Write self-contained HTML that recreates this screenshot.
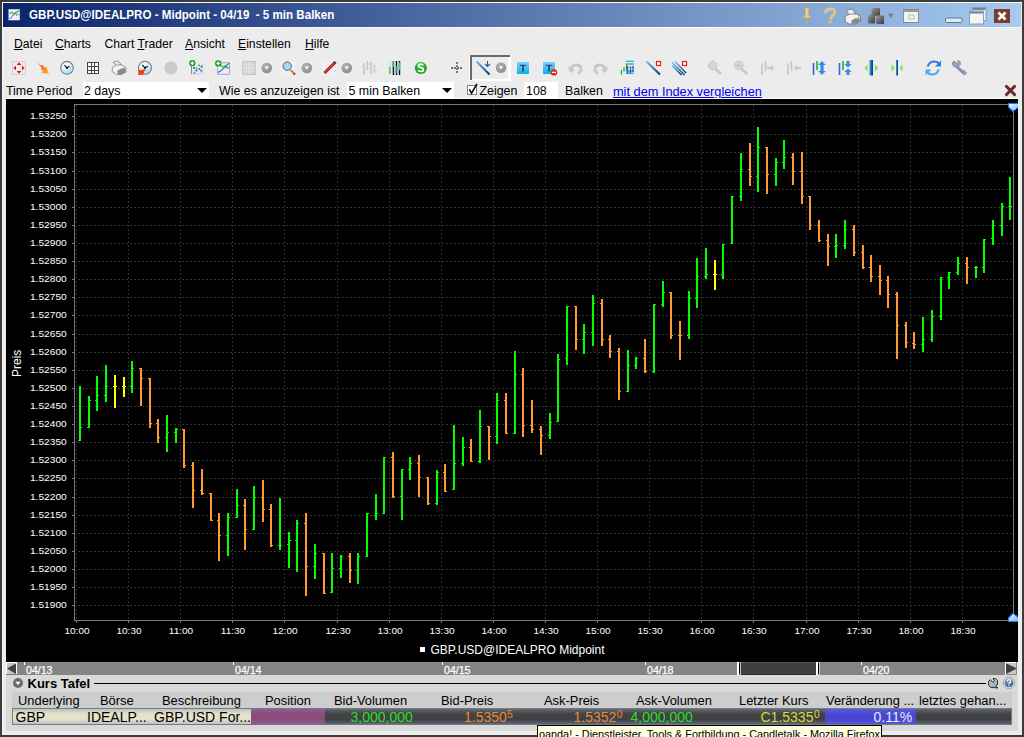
<!DOCTYPE html>
<html><head><meta charset="utf-8">
<style>
*{margin:0;padding:0;box-sizing:border-box}
html,body{width:1024px;height:737px;overflow:hidden;background:#3c3c3c;font-family:"Liberation Sans",sans-serif;color:#000}
.a{position:absolute}
#win{position:absolute;left:2px;top:2px;width:1020px;height:733px;background:#ececec;border-left:1px solid #fafafa;border-top:1px solid #fafafa}
#title{position:absolute;left:3px;top:3px;width:1018px;height:24px;background:linear-gradient(to right,#0a246a,#a6caf0)}
#title .t{position:absolute;left:25.6px;top:4.5px;color:#fff;font-weight:bold;font-size:12.5px;white-space:pre;line-height:15px;transform:scaleX(0.927);transform-origin:0 0}
.menu{position:absolute;top:36.5px;font-size:12.2px;white-space:pre;line-height:15px}
.menu u{text-decoration:underline;text-underline-offset:1px}
.opt{position:absolute;top:84.3px;font-size:12.4px;white-space:pre;line-height:15px}
.wbox{position:absolute;background:#fff}
.darr{position:absolute;width:0;height:0;border-left:5.2px solid transparent;border-right:5.2px solid transparent;border-top:5.2px solid #000}
#chart{position:absolute;left:6px;top:99px;width:1012px;height:563px;background:#000;overflow:hidden}
.yl{position:absolute;left:0;width:60.8px;text-align:right;color:#fff;font-size:9.4px;line-height:13px;white-space:pre;transform:scaleX(1.088);transform-origin:100% 0}
.xl{position:absolute;top:524.5px;width:72px;text-align:center;color:#fff;font-size:9.4px;line-height:13px;transform:scaleX(1.07)}
#scroll{position:absolute;left:6px;top:662px;width:1011px;height:13px;background:#858585}
.dl{position:absolute;top:664px;color:#fff;font-size:10.6px;line-height:12px;-webkit-text-stroke:0.25px #fff}
#panel{position:absolute;left:6px;top:675px;width:1012px;height:56px;background:#d9d9d9}
.hd{position:absolute;top:694px;font-size:12.9px;white-space:pre;line-height:14px}
.dt{position:absolute;top:709.8px;font-size:14px;white-space:pre;line-height:15px}
.dt sup{font-size:10px;vertical-align:0;position:relative;top:-4px;margin-left:0.5px}
</style></head><body>
<div id="win"></div>
<div id="title">
 <svg class="a" style="left:5px;top:5px" width="18" height="18" viewBox="8 8 18 18"><rect x="8.5" y="9.2" width="11.3" height="11.1" fill="#f2eef8"/><path d="M9.5 18.5L11.5 17.6L12.6 15.6L14 14.6L15 12.6L16.5 15L18.6 14.4" stroke="#2a70e0" stroke-width="1.1" fill="none" stroke-dasharray="1.5 0.6"/><path d="M9.5 13.6L11.8 12.2L14 14.2L15.5 13.2L19.3 10.2" stroke="#30c020" stroke-width="1.2" fill="none"/></svg>
 <div class="t">GBP.USD@IDEALPRO - Midpoint - 04/19  - 5 min Balken</div>
</div>
<div class="a" style="left:3px;top:27px;width:1018px;height:1px;background:#fafafa"></div>


<!-- title right icons -->
<svg class="a" style="left:800px;top:5px" width="225" height="22" viewBox="800 5 225 22">
 <!-- pin -->
 <path d="M804 7.5h6v1.5h-1.2v6l2.2 2v1h-3.5v6.5h-1v-6.5h-3.5v-1l2.2-2v-6h-1.2z" fill="#dcc688" stroke="#b09a60" stroke-width="0.4"/>
 <path d="M806.5 9v6" stroke="#f4e8b8" stroke-width="0.8"/>
 <!-- ? -->
 <path d="M825.5 13.2q0-4.2 4.6-4.2q4.6 0 4.6 3.4q0 2.1-2.1 3.2q-1.5.8-1.5 2.5v.8" fill="none" stroke="#dcc688" stroke-width="3"/>
 <rect x="828.7" y="20" width="3.2" height="3.5" fill="#d4b880"/>
 <!-- printer -->
 <path d="M846.5 10.5l5.5-1.5l3.5 4.8l-6 1.7z" fill="#eef2f8" stroke="#555" stroke-width="0.6"/>
 <path d="M845.2 16.5l4.5-2.5h6.5l4.3 2.2v4.8l-5 3h-6.3l-4-2.5z" fill="#f2f2f2" stroke="#666" stroke-width="0.7"/>
 <path d="M851.5 20.5l3.8-2.3l4.5 0.3v3l-5 2.8l-3.3-0.3z" fill="#8a8a8a"/>
 <circle cx="858.5" cy="17.3" r="0.8" fill="#40c040"/>
 <!-- cubes -->
 <defs><linearGradient id="cu" x1="0" y1="0" x2="1" y2="1"><stop offset="0" stop-color="#9a9a9a"/><stop offset="1" stop-color="#3a3a3a"/></linearGradient></defs>
 <rect x="871.5" y="8" width="8.5" height="8" rx="1" fill="url(#cu)"/>
 <rect x="868" y="14.5" width="7" height="9" rx="1" fill="url(#cu)"/>
 <rect x="876" y="15.5" width="8" height="8.5" rx="1" fill="url(#cu)"/>
 <path d="M888 13.5h5.5l-2.75 4.5z" fill="#7a7a7a"/>
 <!-- window -->
 <rect x="903.5" y="9.5" width="15" height="13" fill="#f2f2f2" stroke="#8a8a8a"/>
 <rect x="904" y="10" width="14" height="2" fill="#999"/>
 <rect x="909" y="15" width="5" height="4" fill="none" stroke="#bbb"/>
 <!-- minimize -->
 <rect x="945.5" y="18" width="16.5" height="4.5" rx="1" fill="#dfe8ee" stroke="#5a7a88"/>
 <!-- restore -->
 <rect x="972" y="7.5" width="14" height="13" fill="#f4f4f4" stroke="#8aa0b0"/>
 <rect x="972.5" y="8" width="13" height="2" fill="#6a8898"/>
 <rect x="969.5" y="11" width="14" height="13" fill="#f4f4f4" stroke="#8aa0b0"/>
 <rect x="970" y="11.5" width="13" height="2" fill="#6a8898"/>
 <!-- close -->
 <rect x="994" y="9" width="16" height="14" fill="#7b3b2e"/>
 <path d="M998.5 12.5l7 7M1005.5 12.5l-7 7" stroke="#fff" stroke-width="2.6"/>
</svg>

<!-- toolbar -->
<svg class="a" style="left:0;top:54px" width="1024" height="28" viewBox="0 54 1024 28">
 <defs>
  <radialGradient id="gc" cx="40%" cy="35%" r="70%"><stop offset="0" stop-color="#b4b4b4"/><stop offset="1" stop-color="#8a8a8a"/></radialGradient>
  <radialGradient id="cl" cx="35%" cy="30%" r="75%"><stop offset="0" stop-color="#ffffff"/><stop offset="0.5" stop-color="#d4eefc"/><stop offset="1" stop-color="#a8d8f4"/></radialGradient>
  <radialGradient id="gs" cx="40%" cy="30%" r="75%"><stop offset="0" stop-color="#40d040"/><stop offset="1" stop-color="#109010"/></radialGradient>
  <linearGradient id="og" x1="0" y1="0" x2="1" y2="1"><stop offset="0" stop-color="#d03010"/><stop offset="0.4" stop-color="#ff7020"/><stop offset="1" stop-color="#ffc030"/></linearGradient>
  <linearGradient id="bl" x1="0" y1="0" x2="1" y2="1"><stop offset="0" stop-color="#70c0f8"/><stop offset="1" stop-color="#0a3870"/></linearGradient>
  <linearGradient id="tb" x1="0" y1="0" x2="0" y2="1"><stop offset="0" stop-color="#78d4fa"/><stop offset="1" stop-color="#08b0f4"/></linearGradient>
  <linearGradient id="vb" x1="0" y1="0" x2="1" y2="0"><stop offset="0" stop-color="#3a98e0"/><stop offset="1" stop-color="#083878"/></linearGradient>
 </defs>
 <!-- 1 move -->
 <rect x="12.5" y="61.5" width="13" height="13" fill="none" stroke="#d8d0d0"/>
 <path d="M19 62.3L21.3 65H16.7zM19 73.7L21.3 71H16.7zM13.4 68L16 65.7V70.3zM24.6 68L22 65.7V70.3z" fill="#f00"/>
 <!-- 2 orange arrow -->
 <path d="M37 62.2L41 65.8L42.3 64.8L44.8 67.6L46.2 66.8L49 74L41.2 72.7L43 71.2L40.6 68.6L41.6 67.8z" fill="url(#og)"/>
 <!-- 3 clock -->
 <circle cx="67" cy="67.8" r="6.4" fill="url(#cl)" stroke="#7c7c88" stroke-width="1.1"/>
 <path d="M64.4 65.2L66.9 67.8L69.4 66.4" stroke="#111" stroke-width="1.1" fill="none"/>
 <circle cx="66.9" cy="67.8" r="1.1" fill="#000"/>
 <!-- 4 grid -->
 <g shape-rendering="crispEdges">
 <rect x="87" y="62" width="12" height="12" fill="#45454f"/>
 <path d="M88 63h3v3h-3zM92 63h2v3h-2zM95 63h3v3h-3zM88 67h3v3h-3zM92 67h2v3h-2zM95 67h3v3h-3zM88 71h3v2h-3zM92 71h2v2h-2zM95 71h3v2h-3z" fill="#fcfcff"/>
 </g>
 <!-- 5 printer -->
 <path d="M113 62.3l4.5-1.3l4 3.5l-4.3 1.8z" fill="#d6ecfc" stroke="#555" stroke-width="0.6"/>
 <path d="M112.3 67.5l4.5-2.5h5l4 2.3v4.5l-4.8 2.7h-4.5l-4.2-2.7z" fill="#f4f4f4" stroke="#777" stroke-width="0.7"/>
 <path d="M117.5 70.5l4.5-2.2l3.8 0.6v3.5l-4.5 2.3l-3.8-0.5z" fill="#8a8a8a"/>
 <circle cx="123.8" cy="68.5" r="0.9" fill="#30d030"/>
 <!-- 6 clock orange -->
 <circle cx="145" cy="67.8" r="6.5" fill="url(#cl)" stroke="#7c7c88" stroke-width="1.1"/>
 <path d="M142.3 65L145 67.8L147.8 66.3" stroke="#111" stroke-width="1.1" fill="none"/>
 <circle cx="145" cy="67.8" r="1.1" fill="#000"/>
 <path d="M138.3 69.2l2.5 1.2l1.5-0.8l4.2-0.2l-2.2 1.8l-0.8 3.6l-5.2 0.2z" fill="#f04010"/>
 <!-- 7 gray clock -->
 <circle cx="171" cy="67.8" r="6.6" fill="#cbcbcb"/>
 <path d="M168.5 65.3l2.5 2.5l2.3-1.3" stroke="#bdbdbd" stroke-width="1" fill="none"/>
 <!-- 8 scatter -->
 <rect x="191" y="63" width="11.5" height="10.8" fill="#eeeaf8"/>
 <path d="M202.5 63v10.8H191" stroke="#c8c4dc" stroke-width="1" fill="none"/>
 <path d="M191.5 66v8" stroke="#8a8a9a" stroke-width="1"/>
 <g fill="#1a60d0"><circle cx="194" cy="68" r="1"/><circle cx="201.5" cy="66.5" r="1"/><circle cx="199.5" cy="69" r="1"/><circle cx="196.5" cy="70.5" r="1"/></g>
 <g fill="#30c030"><circle cx="199" cy="65.5" r="1"/><circle cx="196.5" cy="68.3" r="1"/><circle cx="201" cy="70.8" r="1"/><circle cx="194.5" cy="72.5" r="1"/></g>
 <circle cx="192.3" cy="63.2" r="3.1" fill="#10a010"/>
 <path d="M190.4 63.2h3.8M192.3 61.3v3.8" stroke="#fff" stroke-width="1.3"/>
 <!-- 9 line chart -->
 <rect x="217.5" y="62.8" width="12" height="11.5" fill="#eeeaf8" stroke="#a09cc0" stroke-width="0.8"/>
 <path d="M218 72.5l4-2.5l2-2.5l1.5-2l1.5 2.5l2.5-0.5" stroke="#2a70e0" stroke-width="1.1" fill="none"/>
 <path d="M219 65l3 1l2 2l5.5-5" stroke="#20b020" stroke-width="1.2" fill="none"/>
 <circle cx="218.2" cy="63.4" r="3.1" fill="#10a010"/>
 <path d="M216.3 63.4h3.8M218.2 61.5v3.8" stroke="#fff" stroke-width="1.3"/>
 <!-- 10 gray grid -->
 <rect x="242.5" y="61.5" width="13" height="13" fill="#d6d6d6" stroke="#c8c8c8"/>
 <path d="M243 68h12M249 62v12" stroke="#e6e6e6" stroke-width="1"/>
 <path d="M245.5 62v12M252.5 62v12M243 64.5h12M243 71.5h12" stroke="#dedede" stroke-width="0.6"/>
 <!-- gray circles -->
 <g fill="url(#gc)"><circle cx="266.8" cy="68" r="5.3"/><circle cx="306.9" cy="68" r="5.3"/><circle cx="346.8" cy="68" r="5.3"/><circle cx="501" cy="67.8" r="5.2"/></g>
 <g fill="#fff"><path d="M264.7 66.5h4.3l-2.2 3z"/><path d="M304.8 66.5h4.3l-2.2 3z"/><path d="M344.7 66.5h4.3l-2.2 3z"/><path d="M498.9 66.3h4.3l-2.2 3z"/></g>
 <!-- 12 magnifier -->
 <rect x="282" y="61" width="13" height="12.5" fill="#f0f0fc"/>
 <path d="M290.5 70l3.5 3.5" stroke="#f08a20" stroke-width="2.4"/>
 <path d="M293.8 73.3l1.2 1.2" stroke="#555" stroke-width="2.4"/>
 <circle cx="287.2" cy="66.2" r="4.2" fill="#a4d8f6" stroke="#50606a" stroke-width="1"/>
 <!-- 14 pencil -->
 <rect x="322" y="62" width="12.5" height="12.5" fill="#f0f0fa"/>
 <path d="M324.5 73l11-11" stroke="#303030" stroke-width="3"/>
 <path d="M324.5 73l10-10" stroke="#f03010" stroke-width="2"/>
 <!-- 16 gray bars -->
 <path d="M364 63v12M367.3 61v9.5M371 62v12M374.3 65v8" stroke="#c8c8c8" stroke-width="1.6"/>
 <path d="M362 66h1.5M368.5 64h1.5M369.5 68h1.5M375.5 71h1.5" stroke="#c8c8c8" stroke-width="1"/>
 <!-- 17 volume bars -->
 <path d="M389.9 61v6" stroke="#e0e0e0" stroke-width="2"/>
 <path d="M389.9 67v7" stroke="#60d080" stroke-width="2"/>
 <path d="M393.4 61v14M396.5 61v14M399.5 61v14" stroke="#111" stroke-width="1.4"/>
 <path d="M393.4 61v6" stroke="#30c060" stroke-width="1.4"/>
 <path d="M396.5 66v7" stroke="#3a7af0" stroke-width="1.4"/>
 <path d="M399.5 62.5v7.5" stroke="#40d070" stroke-width="1.4"/>
 <!-- 18 $ -->
 <circle cx="420.8" cy="67.9" r="6" fill="url(#gs)"/>
 <path d="M423.3 65.4q-.8-1.3-2.6-1.3q-2.2 0-2.2 1.7q0 1.2 2.4 1.8q2.6.6 2.6 2.1q0 1.8-2.6 1.8q-1.8 0-2.8-1.2" fill="none" stroke="#fff" stroke-width="1.7"/>
 <!-- 19 crosshair -->
 <path d="M451 68h12M457 62v12" stroke="#6e6e6e" stroke-width="1.8" stroke-dasharray="2 1"/>
 <!-- 20 pressed button -->
 <g shape-rendering="crispEdges">
 <rect x="469" y="55" width="42" height="26" fill="#ffffff"/>
 <rect x="470" y="55" width="40" height="2" fill="#6a6a6a"/>
 <rect x="470" y="55" width="2" height="25" fill="#6a6a6a"/>
 <rect x="472" y="57" width="36" height="22" fill="#ececec"/>
 </g>
 <path d="M476.5 61.5l13 13" stroke="url(#bl)" stroke-width="2"/>
 <path d="M487.5 61v5" stroke="#1a5aa0" stroke-width="1"/>
 <path d="M485 64l2.5 2.5l2.5-2.5" stroke="#1a5aa0" stroke-width="1.2" fill="none"/>
 <g fill="url(#gc)"><circle cx="501" cy="67.8" r="5.2"/></g>
 <path d="M498.9 66.3h4.3l-2.2 3z" fill="#fff"/>
 <!-- 21 T -->
 <rect x="517" y="62" width="12" height="12" fill="url(#tb)"/>
 <path d="M519.8 65.3h6.5" stroke="#303840" stroke-width="1"/>
 <path d="M523 65v6.6" stroke="#303840" stroke-width="1.6"/>
 <!-- 22 T minus -->
 <rect x="543" y="62" width="12" height="12" fill="url(#tb)"/>
 <path d="M545.8 65.3h6.5" stroke="#303840" stroke-width="1"/>
 <path d="M549 65v6.6" stroke="#303840" stroke-width="1.6"/>
 <circle cx="554" cy="72.4" r="3.2" fill="#e02a10"/>
 <path d="M552 72.4h4" stroke="#fff" stroke-width="1.3"/>
 <!-- 23 undo / 24 redo -->
 <path d="M570.5 70.5q.5-5.5 5.5-5.5t5 4q0 3-3 4.5" stroke="#c8c8c8" stroke-width="2.8" fill="none"/>
 <path d="M567.5 67l3.5 6.5l3.8-4.5z" fill="#c8c8c8"/>
 <path d="M605.5 70.5q-.5-5.5-5.5-5.5t-5 4q0 3 3 4.5" stroke="#c8c8c8" stroke-width="2.8" fill="none"/>
 <path d="M608.5 67l-3.5 6.5l-3.8-4.5z" fill="#c8c8c8"/>
 <!-- 25 chart -->
 <path d="M626 61.3h8M626 73.3h8" stroke="#20c8e8" stroke-width="1.4"/>
 <path d="M626 64h8M626 71h8" stroke="#6a98a8" stroke-width="1.6"/>
 <path d="M626 67h8" stroke="#a0b0b8" stroke-width="1.4"/>
 <path d="M627.5 66v8M630.5 67v6.5M633 66v6" stroke="#2050e0" stroke-width="1.2"/>
 <path d="M621.5 70v4.5M624 67v4.5M626.5 64v6" stroke="#10b020" stroke-width="1.2"/>
 <!-- 26 line red sq -->
 <path d="M646.5 61.5l13.5 13" stroke="url(#bl)" stroke-width="2"/>
 <rect x="656.5" y="61.5" width="4" height="4" fill="#fff" stroke="#e02010" stroke-width="1.2"/>
 <!-- 27 triple lines -->
 <g stroke="url(#bl)" stroke-width="1.5"><path d="M672 62.5l12.5 12.5"/><path d="M675 61.5l11 11.5"/><path d="M672 65.5l9.5 9.5"/></g>
 <rect x="682.5" y="61.5" width="4" height="4" fill="#fff" stroke="#e02010" stroke-width="1.2"/>
 <!-- 28/29 gray magnifiers -->
 <path d="M715.5 69l5.5 5M741.5 69l5.5 5" stroke="#c8c8c8" stroke-width="2.8"/>
 <circle cx="712.6" cy="65.5" r="4.3" fill="#d6d6d6" stroke="#c6c6c6"/>
 <circle cx="738.8" cy="65.5" r="4.3" fill="#d6d6d6" stroke="#c6c6c6"/>
 <path d="M736.6 65.5h4.4" stroke="#bbb" stroke-width="1.2"/>
 <!-- 30/31 -->
 <path d="M762 63.5v11.5M765.5 61v10M788 63.5v11.5M791.5 61v10" stroke="#c8c8c8" stroke-width="1.6"/>
 <path d="M767 67h4v-2l3.5 3l-3.5 3v-2h-4zM801 67h-4v-2l-3.5 3l3.5 3v-2h4z" fill="#c8c8c8"/>
 <!-- 32/33 -->
 <path d="M813.5 63v12M839.5 63v12" stroke="#4a5ae0" stroke-width="1.6"/>
 <path d="M817 61v9M843 61v9" stroke="#20b040" stroke-width="1.6"/>
 <path d="M822 61l3.8 4h-2.2v6h2.2l-3.8 4l-3.8-4h2.2v-6h-2.2z" fill="#3a8ae8"/>
 <path d="M848 67.6l3.8-3.6h-2.3v-3h-3v3h-2.3zM848 68.4l3.8 3.6h-2.3v3h-3v-3h-2.3z" fill="#3a8ae8"/>
 <!-- 34/35 -->
 <rect x="869.5" y="60" width="3.5" height="15.5" fill="url(#vb)"/>
 <path d="M864.5 68l3.2-3.8v7.6zM878 68l-3.2-3.8v7.6z" fill="#80e060"/>
 <rect x="896" y="60" width="2" height="15.5" fill="url(#vb)"/>
 <path d="M894.7 68l-3.2-3.8v7.6zM899.3 68l3.2-3.8v7.6z" fill="#80e060"/>
 <!-- 36 refresh -->
 <path d="M927.8 66.5q1.5-5 6.5-5q3.2 0 5 2.3" stroke="#2a80e0" stroke-width="2.2" fill="none"/>
 <path d="M941 60.5v6h-6z" fill="#2a80e0"/>
 <path d="M938.7 69.5q-1.5 5-6.5 5q-3.2 0-5-2.3" stroke="#4aa8f4" stroke-width="2.2" fill="none"/>
 <path d="M925.5 75.5v-6h6z" fill="#4aa8f4"/>
 <!-- 37 wrench -->
 <path d="M955.5 65.5l8.5 7.8" stroke="#8494aa" stroke-width="3"/>
 <path d="M952 64.3q0-3 2.8-3.3l1.4 2.3l1.8-.9l-.4-2.1q3 .6 3 3.3q0 2.2-2.2 3l-4.2.4z" fill="#94a4b8" stroke="#6a7a90" stroke-width="0.5"/>
 <path d="M961.8 71l2.6 4.2l2.2-2l-2.4-3z" fill="#94a4b8" stroke="#6a7a90" stroke-width="0.5"/>
</svg>

<div class="menu" style="left:14px"><u>D</u>atei</div>
<div class="menu" style="left:55px"><u>C</u>harts</div>
<div class="menu" style="left:104.5px">Chart <u>T</u>rader</div>
<div class="menu" style="left:185px"><u>A</u>nsicht</div>
<div class="menu" style="left:238px"><u>E</u>instellen</div>
<div class="menu" style="left:305px"><u>H</u>ilfe</div>

<!-- options row -->
<div class="opt" style="left:6px">Time Period</div>
<div class="wbox" style="left:83px;top:82px;width:126px;height:16px"></div>
<div class="opt" style="left:84px">2 days</div>
<div class="darr" style="left:196.8px;top:88px"></div>
<div class="opt" style="left:219px">Wie es anzuzeigen ist</div>
<div class="wbox" style="left:347px;top:82px;width:107px;height:16px"></div>
<div class="opt" style="left:348.5px">5 min Balken</div>
<div class="darr" style="left:441.8px;top:88px"></div>
<svg class="a" style="left:466px;top:82px" width="13" height="14" viewBox="466 82 13 14"><rect x="467.5" y="85.5" width="9" height="9" fill="#fff" stroke="#808080"/><path d="M469.3 89.3L471.6 93.2L477 83.8" stroke="#000" stroke-width="1.5" fill="none"/></svg>
<div class="opt" style="left:479.5px">Zeigen</div>
<div class="wbox" style="left:524px;top:82px;width:34px;height:16px"></div>
<div class="opt" style="left:526px">108</div>
<div class="opt" style="left:565px">Balken</div>
<div class="opt" style="left:613px;color:#0000ee;text-decoration:underline;font-size:12.75px">mit dem Index vergleichen</div>
<svg class="a" style="left:1004px;top:84px" width="13" height="13"><path d="M2.4 2.4L10.6 10.6M10.6 2.4L2.4 10.6" stroke="#6e2a2a" stroke-width="2.9" stroke-linecap="round"/></svg>

<div class="a" style="left:6px;top:98px;width:1012px;height:1px;background:#fff"></div>
<div id="chart">
<svg width="1012" height="563" viewBox="6 99 1012 563" style="position:absolute;left:0;top:0" shape-rendering="crispEdges">
<path d="M78 116.5H1013 M78 134.5H1013 M78 152.5H1013 M78 171.5H1013 M78 189.5H1013 M78 207.5H1013 M78 225.5H1013 M78 243.5H1013 M78 261.5H1013 M78 279.5H1013 M78 297.5H1013 M78 315.5H1013 M78 334.5H1013 M78 352.5H1013 M78 370.5H1013 M78 388.5H1013 M78 406.5H1013 M78 424.5H1013 M78 442.5H1013 M78 460.5H1013 M78 478.5H1013 M78 497.5H1013 M78 515.5H1013 M78 533.5H1013 M78 551.5H1013 M78 569.5H1013 M78 587.5H1013 M78 605.5H1013" stroke="#303030" stroke-width="1" stroke-dasharray="2 2" stroke-dashoffset="0" fill="none"/>
<path d="M76.5 105V620 M128.5 105V620 M180.5 105V620 M232.5 105V620 M284.5 105V620 M337.5 105V620 M389.5 105V620 M441.5 105V620 M493.5 105V620 M545.5 105V620 M597.5 105V620 M649.5 105V620 M701.5 105V620 M753.5 105V620 M806.5 105V620 M858.5 105V620 M910.5 105V620 M962.5 105V620" stroke="#303030" stroke-width="1" stroke-dasharray="2 2" fill="none"/>
<path d="M74.5 104V620.5H1013.5V104" stroke="#7a7a7a" stroke-width="1" fill="none"/>
<path d="M74.5 104.5H1013" stroke="#7a7a7a" stroke-width="1" fill="none"/>
<path d="M72 116.5H74 M72 134.5H74 M72 152.5H74 M72 171.5H74 M72 189.5H74 M72 207.5H74 M72 225.5H74 M72 243.5H74 M72 261.5H74 M72 279.5H74 M72 297.5H74 M72 315.5H74 M72 334.5H74 M72 352.5H74 M72 370.5H74 M72 388.5H74 M72 406.5H74 M72 424.5H74 M72 442.5H74 M72 460.5H74 M72 478.5H74 M72 497.5H74 M72 515.5H74 M72 533.5H74 M72 551.5H74 M72 569.5H74 M72 587.5H74 M72 605.5H74 M76.5 620V623 M128.5 620V623 M180.5 620V623 M232.5 620V623 M284.5 620V623 M337.5 620V623 M389.5 620V623 M441.5 620V623 M493.5 620V623 M545.5 620V623 M597.5 620V623 M649.5 620V623 M701.5 620V623 M753.5 620V623 M806.5 620V623 M858.5 620V623 M910.5 620V623 M962.5 620V623" stroke="#7a7a7a" stroke-width="1" fill="none"/>
<path d="M79 386h2v55h-2zM78 440h1v1h-1zM81 427h1v1h-1zM88 396h2v32h-2zM87 427h1v1h-1zM90 400h1v1h-1zM96 376h2v35h-2zM95 400h1v1h-1zM98 395h1v1h-1zM105 365h2v37h-2zM104 395h1v1h-1zM107 386h1v1h-1zM131 361h2v32h-2zM130 386h1v1h-1zM133 368h1v1h-1zM166 415h2v37h-2zM165 437h1v1h-1zM168 432h1v1h-1zM175 428h2v15h-2zM174 432h1v1h-1zM177 429h1v1h-1zM227 513h2v43h-2zM226 535h1v1h-1zM229 517h1v1h-1zM236 489h2v29h-2zM235 517h1v1h-1zM238 505h1v1h-1zM253 486h2v44h-2zM252 529h1v1h-1zM255 497h1v1h-1zM279 498h2v52h-2zM278 545h1v1h-1zM281 545h1v1h-1zM288 532h2v36h-2zM287 544h1v1h-1zM290 540h1v1h-1zM296 520h2v52h-2zM295 540h1v1h-1zM298 523h1v1h-1zM314 544h2v35h-2zM313 566h1v1h-1zM316 553h1v1h-1zM331 553h2v40h-2zM330 592h1v1h-1zM333 568h1v1h-1zM340 555h2v23h-2zM339 568h1v1h-1zM342 556h1v1h-1zM357 553h2v31h-2zM356 570h1v1h-1zM359 556h1v1h-1zM366 513h2v44h-2zM365 556h1v1h-1zM368 513h1v1h-1zM375 494h2v26h-2zM374 515h1v1h-1zM377 513h1v1h-1zM383 457h2v57h-2zM382 513h1v1h-1zM385 457h1v1h-1zM401 469h2v51h-2zM400 496h1v1h-1zM403 469h1v1h-1zM409 457h2v23h-2zM408 469h1v1h-1zM411 463h1v1h-1zM436 470h2v35h-2zM435 503h1v1h-1zM438 472h1v1h-1zM453 425h2v65h-2zM452 489h1v1h-1zM455 463h1v1h-1zM462 437h2v29h-2zM461 463h1v1h-1zM464 447h1v1h-1zM479 410h2v53h-2zM478 461h1v1h-1zM481 426h1v1h-1zM496 393h2v51h-2zM495 436h1v1h-1zM498 400h1v1h-1zM514 351h2v83h-2zM513 433h1v1h-1zM516 374h1v1h-1zM549 413h2v26h-2zM548 435h1v1h-1zM551 422h1v1h-1zM557 354h2v68h-2zM556 421h1v1h-1zM559 359h1v1h-1zM566 306h2v59h-2zM565 358h1v1h-1zM568 306h1v1h-1zM583 324h2v30h-2zM582 339h1v1h-1zM585 332h1v1h-1zM592 295h2v51h-2zM591 332h1v1h-1zM594 303h1v1h-1zM627 350h2v42h-2zM626 391h1v1h-1zM629 365h1v1h-1zM635 357h2v12h-2zM634 365h1v1h-1zM637 358h1v1h-1zM653 304h2v69h-2zM652 371h1v1h-1zM655 304h1v1h-1zM662 281h2v26h-2zM661 304h1v1h-1zM664 292h1v1h-1zM688 291h2v48h-2zM687 335h1v1h-1zM690 298h1v1h-1zM696 258h2v50h-2zM695 298h1v1h-1zM698 276h1v1h-1zM705 248h2v31h-2zM704 276h1v1h-1zM707 274h1v1h-1zM722 244h2v35h-2zM721 274h1v1h-1zM724 244h1v1h-1zM731 196h2v48h-2zM730 243h1v1h-1zM733 196h1v1h-1zM740 153h2v48h-2zM739 196h1v1h-1zM742 169h1v1h-1zM757 127h2v65h-2zM756 176h1v1h-1zM759 147h1v1h-1zM775 158h2v28h-2zM774 174h1v1h-1zM777 162h1v1h-1zM783 140h2v29h-2zM782 162h1v1h-1zM785 157h1v1h-1zM835 234h2v24h-2zM834 246h1v1h-1zM837 245h1v1h-1zM844 220h2v29h-2zM843 245h1v1h-1zM846 229h1v1h-1zM922 317h2v35h-2zM921 344h1v1h-1zM924 339h1v1h-1zM931 310h2v32h-2zM930 339h1v1h-1zM933 316h1v1h-1zM940 277h2v43h-2zM939 316h1v1h-1zM942 277h1v1h-1zM948 272h2v17h-2zM947 277h1v1h-1zM950 272h1v1h-1zM957 257h2v18h-2zM956 272h1v1h-1zM959 263h1v1h-1zM975 266h2v12h-2zM974 267h1v1h-1zM977 267h1v1h-1zM983 239h2v34h-2zM982 267h1v1h-1zM985 239h1v1h-1zM992 220h2v25h-2zM991 238h1v1h-1zM994 225h1v1h-1zM1001 203h2v33h-2zM1000 225h1v1h-1zM1003 206h1v1h-1zM1009 177h2v43h-2zM1008 206h1v1h-1zM1011 206h1v1h-1z" fill="#00ff00"/>
<path d="M140 368h2v38h-2zM139 368h1v1h-1zM142 378h1v1h-1zM149 378h2v50h-2zM148 378h1v1h-1zM151 423h1v1h-1zM157 419h2v24h-2zM156 423h1v1h-1zM159 437h1v1h-1zM183 429h2v39h-2zM182 429h1v1h-1zM185 465h1v1h-1zM192 462h2v46h-2zM191 465h1v1h-1zM194 490h1v1h-1zM201 469h2v26h-2zM200 490h1v1h-1zM203 493h1v1h-1zM210 493h2v28h-2zM209 493h1v1h-1zM212 520h1v1h-1zM218 513h2v48h-2zM217 520h1v1h-1zM220 535h1v1h-1zM244 499h2v51h-2zM243 505h1v1h-1zM246 529h1v1h-1zM262 480h2v42h-2zM261 497h1v1h-1zM264 509h1v1h-1zM270 504h2v43h-2zM269 509h1v1h-1zM272 545h1v1h-1zM305 513h2v83h-2zM304 523h1v1h-1zM307 566h1v1h-1zM323 553h2v41h-2zM322 553h1v1h-1zM325 593h1v1h-1zM349 553h2v30h-2zM348 556h1v1h-1zM351 570h1v1h-1zM392 452h2v46h-2zM391 457h1v1h-1zM394 496h1v1h-1zM418 455h2v42h-2zM417 463h1v1h-1zM420 477h1v1h-1zM427 477h2v28h-2zM426 477h1v1h-1zM429 503h1v1h-1zM444 464h2v28h-2zM443 472h1v1h-1zM446 491h1v1h-1zM470 439h2v23h-2zM469 447h1v1h-1zM472 461h1v1h-1zM488 426h2v34h-2zM487 426h1v1h-1zM490 436h1v1h-1zM505 393h2v41h-2zM504 400h1v1h-1zM507 433h1v1h-1zM522 368h2v69h-2zM521 374h1v1h-1zM524 425h1v1h-1zM531 400h2v33h-2zM530 425h1v1h-1zM533 429h1v1h-1zM540 426h2v29h-2zM539 429h1v1h-1zM542 435h1v1h-1zM575 306h2v44h-2zM574 306h1v1h-1zM577 339h1v1h-1zM601 299h2v47h-2zM600 303h1v1h-1zM603 339h1v1h-1zM609 335h2v23h-2zM608 339h1v1h-1zM611 351h1v1h-1zM618 348h2v52h-2zM617 351h1v1h-1zM620 391h1v1h-1zM644 339h2v34h-2zM643 358h1v1h-1zM646 371h1v1h-1zM670 292h2v47h-2zM669 292h1v1h-1zM672 335h1v1h-1zM679 321h2v39h-2zM678 335h1v1h-1zM681 335h1v1h-1zM749 143h2v43h-2zM748 169h1v1h-1zM751 176h1v1h-1zM766 147h2v47h-2zM765 147h1v1h-1zM768 174h1v1h-1zM792 153h2v32h-2zM791 157h1v1h-1zM794 171h1v1h-1zM801 152h2v52h-2zM800 171h1v1h-1zM803 196h1v1h-1zM809 196h2v34h-2zM808 196h1v1h-1zM811 225h1v1h-1zM818 220h2v22h-2zM817 225h1v1h-1zM820 240h1v1h-1zM827 234h2v32h-2zM826 240h1v1h-1zM829 246h1v1h-1zM853 225h2v31h-2zM852 229h1v1h-1zM855 252h1v1h-1zM862 245h2v24h-2zM861 252h1v1h-1zM864 267h1v1h-1zM870 255h2v27h-2zM869 267h1v1h-1zM872 276h1v1h-1zM879 265h2v30h-2zM878 276h1v1h-1zM881 280h1v1h-1zM887 276h2v32h-2zM886 280h1v1h-1zM889 294h1v1h-1zM896 292h2v67h-2zM895 294h1v1h-1zM898 325h1v1h-1zM905 322h2v26h-2zM904 325h1v1h-1zM907 342h1v1h-1zM913 332h2v17h-2zM912 343h1v1h-1zM915 344h1v1h-1zM966 257h2v27h-2zM965 263h1v1h-1zM968 267h1v1h-1z" fill="#ff9933"/>
<path d="M114 375h2v33h-2zM113 386h1v1h-1zM116 386h1v1h-1zM123 377h2v20h-2zM122 386h1v1h-1zM125 386h1v1h-1zM714 260h2v30h-2zM713 274h1v1h-1zM716 274h1v1h-1z" fill="#ffff00"/>
<defs><linearGradient id="mk" x1="0" y1="0" x2="1" y2="1"><stop offset="0" stop-color="#ffffff"/><stop offset="0.6" stop-color="#a8d0f8"/><stop offset="1" stop-color="#80b8f0"/></linearGradient></defs>
<path d="M1008.5 103.5H1018.5V106.8L1013.3 111.5L1008.5 106.8z" fill="url(#mk)" stroke="#1a7cf0" stroke-width="1.2"/>
<path d="M1008.5 621.5H1018.5V618.2L1013.3 613.3L1008.5 618.2z" fill="url(#mk)" stroke="#1a7cf0" stroke-width="1.2"/>
</svg>
<div class="yl" style="top:10.2px">1.53250</div><div class="yl" style="top:28.3px">1.53200</div><div class="yl" style="top:46.4px">1.53150</div><div class="yl" style="top:64.5px">1.53100</div><div class="yl" style="top:82.6px">1.53050</div><div class="yl" style="top:100.8px">1.53000</div><div class="yl" style="top:118.9px">1.52950</div><div class="yl" style="top:137.0px">1.52900</div><div class="yl" style="top:155.1px">1.52850</div><div class="yl" style="top:173.2px">1.52800</div><div class="yl" style="top:191.3px">1.52750</div><div class="yl" style="top:209.4px">1.52700</div><div class="yl" style="top:227.5px">1.52650</div><div class="yl" style="top:245.6px">1.52600</div><div class="yl" style="top:263.7px">1.52550</div><div class="yl" style="top:281.8px">1.52500</div><div class="yl" style="top:300.0px">1.52450</div><div class="yl" style="top:318.1px">1.52400</div><div class="yl" style="top:336.2px">1.52350</div><div class="yl" style="top:354.3px">1.52300</div><div class="yl" style="top:372.4px">1.52250</div><div class="yl" style="top:390.5px">1.52200</div><div class="yl" style="top:408.6px">1.52150</div><div class="yl" style="top:426.7px">1.52100</div><div class="yl" style="top:444.8px">1.52050</div><div class="yl" style="top:463.0px">1.52000</div><div class="yl" style="top:481.1px">1.51950</div><div class="yl" style="top:499.2px">1.51900</div>
<div class="xl" style="left:34.5px">10:00</div><div class="xl" style="left:86.5px">10:30</div><div class="xl" style="left:138.5px">11:00</div><div class="xl" style="left:190.5px">11:30</div><div class="xl" style="left:242.5px">12:00</div><div class="xl" style="left:295.5px">12:30</div><div class="xl" style="left:347.5px">13:00</div><div class="xl" style="left:399.5px">13:30</div><div class="xl" style="left:451.5px">14:00</div><div class="xl" style="left:503.5px">14:30</div><div class="xl" style="left:555.5px">15:00</div><div class="xl" style="left:607.5px">15:30</div><div class="xl" style="left:659.5px">16:00</div><div class="xl" style="left:711.5px">16:30</div><div class="xl" style="left:764.5px">17:00</div><div class="xl" style="left:816.5px">17:30</div><div class="xl" style="left:868.5px">18:00</div><div class="xl" style="left:920.5px">18:30</div>
<div class="a" style="left:414.3px;top:548.3px;width:5px;height:5px;background:#fff"></div><div class="a" style="left:424.5px;top:544px;color:#fff;font-size:12px;line-height:14px;white-space:pre">GBP.USD@IDEALPRO Midpoint</div>
<div class="a" style="left:4px;top:278px;color:#fff;font-size:12px;line-height:14px;transform:rotate(-90deg);transform-origin:0 0;white-space:pre">Preis</div>
</div>

<div id="scroll"></div>
<svg class="a" style="left:6px;top:662px" width="1012" height="13" viewBox="6 662 1012 13" shape-rendering="crispEdges">
 <rect x="6" y="662" width="11" height="13" fill="#fff"/>
 <rect x="7" y="663" width="9" height="11" fill="#c4c4c4"/>
 <path d="M7 668.5L16 663.5V674z" fill="#404040" shape-rendering="auto"/>
 <rect x="6" y="674" width="11" height="1" fill="#7a7a7a"/>
 <rect x="1005" y="662" width="12" height="13" fill="#fff"/>
 <rect x="1006" y="663" width="11" height="12" fill="#c8c8c8"/>
 <rect x="1016" y="662" width="1" height="13" fill="#8a8a8a"/>
 <rect x="1006" y="674" width="11" height="1" fill="#8a8a8a"/>
 <path d="M1006 663.2L1017 668.5L1006 674z" fill="#404040" shape-rendering="auto"/>
 <rect x="737" y="662" width="2" height="13" fill="#fff"/>
 <rect x="739" y="663" width="1" height="11" fill="#000"/>
 <rect x="740" y="662" width="1" height="13" fill="#c0c0c0"/>
 <rect x="741" y="662" width="75" height="13" fill="#404040"/>
 <rect x="741" y="662" width="75" height="1" fill="#5a5a5a"/>
 <rect x="741" y="674" width="75" height="1" fill="#2c2c2c"/>
 <rect x="816" y="662" width="2" height="13" fill="#fff"/>
 <rect x="818" y="663" width="1" height="11" fill="#000"/>
 <rect x="819" y="662" width="1" height="13" fill="#c8c8c8"/>
 <path d="M24 662v3M233 662v3M442 662v3M645 662v3M861 662v3" stroke="#fff" stroke-width="1" transform="translate(0.5 0)"/>
</svg>
<div class="dl" style="left:26px">04/13</div>
<div class="dl" style="left:235px">04/14</div>
<div class="dl" style="left:444px">04/15</div>
<div class="dl" style="left:647px">04/18</div>
<div class="dl" style="left:863px">04/20</div>

<div id="panel"></div>
<svg class="a" style="left:12px;top:677px" width="12" height="12"><circle cx="6" cy="6" r="5" fill="#6a6a6a"/><path d="M3.3 4.8h5.4L6 8z" fill="#fff"/></svg>
<div class="a" style="left:27.5px;top:677px;font-weight:bold;font-size:13px;line-height:14px">Kurs Tafel</div>
<div class="a" style="left:94px;top:683px;width:892px;height:1px;background:#000"></div>
<svg class="a" style="left:986px;top:676px" width="32" height="14" viewBox="986 676 32 14">
 <defs><linearGradient id="wr" x1="0" y1="0" x2="1" y2="1"><stop offset="0" stop-color="#c8d4de"/><stop offset="1" stop-color="#8a9aac"/></linearGradient>
 <radialGradient id="hp" cx="40%" cy="35%" r="70%"><stop offset="0" stop-color="#7a9cc8"/><stop offset="1" stop-color="#3a5a88"/></radialGradient></defs>
 <path d="M993 678.6L995.6 678.6L997.6 680.6L997.6 684L996 686.4L998 688L994 687.6L991 687.6L988.6 685.4L988.6 681.4L990.4 679.6L991.6 681.6L993.6 682.2L994.4 680.4z" fill="url(#wr)" stroke="#2a2a2a" stroke-width="1"/>
 <circle cx="1009" cy="682.8" r="5.8" fill="#e4e4e4" stroke="#9a9a9a" stroke-width="0.8"/>
 <circle cx="1009" cy="682.8" r="4.4" fill="url(#hp)"/>
 <path d="M1007.2 681.6q0-1.9 1.8-1.9t1.8 1.7q0 1-1 1.4t-.8 1.5" stroke="#fff" stroke-width="1.2" fill="none"/>
 <rect x="1008.4" y="685.2" width="1.2" height="1.2" fill="#fff"/>
</svg>
<div class="a" style="left:12px;top:692px;width:1000px;height:16px;background:#cdcdcd"></div>
<div class="hd" style="left:18px">Underlying</div>
<div class="hd" style="left:100px">Börse</div>
<div class="hd" style="left:162px">Beschreibung</div>
<div class="hd" style="left:265px">Position</div>
<div class="hd" style="left:334px">Bid-Volumen</div>
<div class="hd" style="left:441px">Bid-Preis</div>
<div class="hd" style="left:544px">Ask-Preis</div>
<div class="hd" style="left:636px">Ask-Volumen</div>
<div class="hd" style="left:739px">Letzter Kurs</div>
<div class="hd" style="left:826px">Veränderung ...</div>
<div class="hd" style="left:919px">letztes gehan...</div>

<div class="a" style="left:12px;top:708px;width:1000px;height:17px;background:#7a7a7a"></div>
<div class="a" style="left:13px;top:709px;width:238px;height:15px;background:linear-gradient(#b4c4c8,#e6e2c8 35%,#e8e4c8 65%,#b8c4c4)"></div>
<div class="a" style="left:251px;top:709px;width:74px;height:15px;background:linear-gradient(#8a5e9c,#8e4a7a 35%,#8e4a7a 65%,#8a5a98)"></div>
<div class="a" style="left:325px;top:709px;width:500px;height:15px;background:linear-gradient(#5c6c7c,#444 30%,#404040 70%,#5a6878)"></div>
<div class="a" style="left:825px;top:709px;width:91px;height:15px;background:linear-gradient(#5a5ae0,#4848d0 40%,#4646cc 60%,#5656dc)"></div>
<div class="a" style="left:916px;top:709px;width:95px;height:15px;background:linear-gradient(#5c6c7c,#444 30%,#404040 70%,#5a6878)"></div>
<div class="dt" style="left:15.5px">GBP</div>
<div class="dt" style="left:87px">IDEALP...</div>
<div class="dt" style="left:154px">GBP.USD For...</div>
<div class="dt" style="left:350.5px;color:#2ade2a">3,000,000</div>
<div class="dt" style="left:464px;color:#e8883a">1.5350<sup>5</sup></div>
<div class="dt" style="left:573.5px;color:#e8883a">1.5352<sup>0</sup></div>
<div class="dt" style="left:630.5px;color:#2ade2a">4,000,000</div>
<div class="dt" style="left:760.5px;color:#d8d830">C1.5335<sup>0</sup></div>
<div class="dt" style="left:873.5px;color:#e8e8ff">0.11%</div>

<div class="a" style="left:537px;top:725px;width:345px;height:14px;background:#ffffe1;border:1px solid #000"></div>
<div class="a" style="left:539px;top:726.8px;font-size:10.85px;line-height:14px;white-space:pre">oanda! - Dienstleister, Tools &amp; Fortbildung - Candletalk - Mozilla Firefox</div>
</body></html>
